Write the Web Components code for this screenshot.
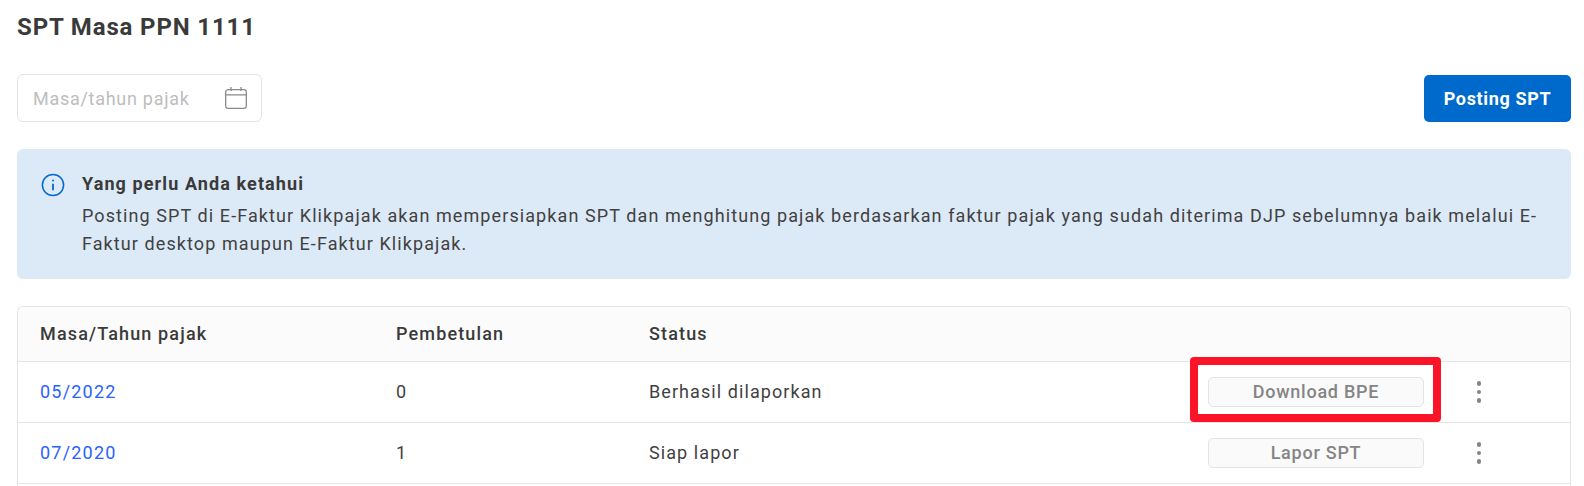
<!DOCTYPE html>
<html>
<head>
<meta charset="utf-8">
<title>SPT Masa PPN</title>
<style>
  html, body { margin: 0; background: #fff; }
  body { font-family: Roboto, "Liberation Sans", sans-serif; color: #3a3a3a; overflow: hidden; height: 486px; }
</style>
</head>
<body>
<spt-page></spt-page>

<script>
class DateInput extends HTMLElement {
  constructor() {
    super();
    this.attachShadow({ mode: "open" }).innerHTML = `
    <style>
      :host { display: flex; align-items: center; justify-content: space-between; box-sizing: border-box;
        width: 245px; height: 48px; padding: 0 14px 0 15px; border: 1px solid #e4e4e4; border-radius: 6px; background: #fff; }
      span { font-size: 18px; letter-spacing: .72px; color: #bdbdbd; }
      svg { display: block; }
    </style>
    <span>${this.getAttribute("placeholder")}</span>
    <svg width="22" height="22" viewBox="0 0 22 22" fill="none" stroke="#8a8a8a" stroke-width="1.3">
      <rect x=".7" y="2.7" width="20.6" height="18.6" rx="2.4"/>
      <path d="M.7 7.8h20.6M6 0v4M16 0v4"/>
    </svg>`;
  }
}

class InfoAlert extends HTMLElement {
  constructor() {
    super();
    this.attachShadow({ mode: "open" }).innerHTML = `
    <style>
      :host { display: flex; box-sizing: border-box; height: 130px; padding: 21px 24px 0 24px; gap: 17px;
        background: #dce9f7; border-radius: 6px; }
      svg { flex: none; display: block; margin-top: 3px; }
      .title { font-size: 18px; font-weight: 700; line-height: 28px; letter-spacing: 1.1px; color: #3a3a3a; margin-bottom: 4px; }
      .body { font-size: 18px; line-height: 28px; letter-spacing: 1.09px; color: #414141; }
    </style>
    <svg width="24" height="24" viewBox="0 0 24 24" fill="none" stroke="#0069cc" stroke-width="1.5">
      <circle cx="12" cy="12" r="10.6"/>
      <path d="M12 10.8v6.4" stroke-width="1.8"/>
      <circle cx="12" cy="7.4" r="1" fill="#0069cc" stroke="none"/>
    </svg>
    <div>
      <div class="title"><slot name="title"></slot></div>
      <div class="body"><slot></slot></div>
    </div>`;
  }
}

class SptRow extends HTMLElement {
  constructor() {
    super();
    const action = this.getAttribute("action");
    const marked = this.hasAttribute("marked");
    this.attachShadow({ mode: "open" }).innerHTML = `
    <style>
      :host { display: grid; grid-template-columns: 356px 253px 559px 216px 1fr; align-items: center; height: 61px;
        box-sizing: border-box; padding-left: 22px; border-top: 1px solid #e4e4e4; font-size: 18px; letter-spacing: 1.08px; color: #3f3f3f; }
      span { padding-bottom: 2px; }
      .link { color: #2962ff; letter-spacing: 1.2px; }
      .cell { position: relative; }
      button { display: block; width: 216px; height: 30px; padding: 0 0 2px; font: 500 18px Roboto, "Liberation Sans", sans-serif; letter-spacing: .75px;
        color: #858585; background: #fafafa; border: 1px solid #e4e4e4; border-radius: 5px; }
      .mark { position: absolute; left: -18px; top: -20px; width: 251px; height: 65px; box-sizing: border-box;
        border: 8px solid #fb1327; border-radius: 4px; pointer-events: none; }
      .dots { display: flex; flex-direction: column; gap: 4px; margin-left: 53px; width: 4.4px; }
      .dots i { display: block; width: 4.4px; height: 4.4px; border-radius: 50%; background: #858585; }
    </style>
    <span class="link">${this.getAttribute("period")}</span>
    <span>${this.getAttribute("fix")}</span>
    <span>${this.getAttribute("status")}</span>
    <div class="cell"><button>${action}</button>${marked ? '<div class="mark"></div>' : ""}</div>
    <div class="dots"><i></i><i></i><i></i></div>`;
  }
}

class SptTable extends HTMLElement {
  constructor() {
    super();
    this.attachShadow({ mode: "open" }).innerHTML = `
    <style>
      :host { display: block; height: 180px; box-sizing: border-box; border: 1px solid #e4e4e4; border-bottom: 0; border-radius: 6px 6px 0 0; }
      .head { display: grid; grid-template-columns: 356px 253px 1fr; align-items: center; box-sizing: border-box; height: 54px; padding: 0 0 2px 22px;
        background: #fbfbfb; border-radius: 6px 6px 0 0; font-size: 18px; font-weight: 500; letter-spacing: 1.15px; color: #3a3a3a; }
      ::slotted(spt-row:last-child) { height: 62px; border-bottom: 1px solid #e4e4e4; }
    </style>
    <div class="head"><span>Masa/Tahun pajak</span><span>Pembetulan</span><span>Status</span></div>
    <slot></slot>`;
  }
}

class SptPage extends HTMLElement {
  constructor() {
    super();
    this.attachShadow({ mode: "open" }).innerHTML = `
    <style>
      :host { display: block; padding: 0 13px 0 17px; }
      h1 { margin: 0; padding-top: 14px; height: 74px; box-sizing: border-box; font-size: 24px; line-height: 27px; font-weight: 700; letter-spacing: .85px; color: #3a3a3a; }
      .bar { display: flex; align-items: flex-start; justify-content: space-between; height: 75px; }
      .primary { width: 147px; height: 47px; margin-top: 1px; padding: 0; border: 0; border-radius: 5px; background: #0069cc; color: #fff;
        font: 700 18px Roboto, "Liberation Sans", sans-serif; letter-spacing: .65px; }
      info-alert { margin-bottom: 27px; }
    </style>
    <h1>SPT Masa PPN 1111</h1>
    <div class="bar">
      <date-input placeholder="Masa/tahun pajak"></date-input>
      <button class="primary">Posting SPT</button>
    </div>
    <info-alert>
      <span slot="title">Yang perlu Anda ketahui</span>
      Posting SPT di E-Faktur Klikpajak akan mempersiapkan SPT dan menghitung pajak berdasarkan faktur pajak yang sudah diterima DJP sebelumnya baik melalui E-Faktur desktop maupun E-Faktur Klikpajak.
    </info-alert>
    <spt-table>
      <spt-row period="05/2022" fix="0" status="Berhasil dilaporkan" action="Download BPE" marked></spt-row>
      <spt-row period="07/2020" fix="1" status="Siap lapor" action="Lapor SPT"></spt-row>
    </spt-table>`;
  }
}

customElements.define("date-input", DateInput);
customElements.define("info-alert", InfoAlert);
customElements.define("spt-row", SptRow);
customElements.define("spt-table", SptTable);
customElements.define("spt-page", SptPage);
</script>
</body>
</html>
